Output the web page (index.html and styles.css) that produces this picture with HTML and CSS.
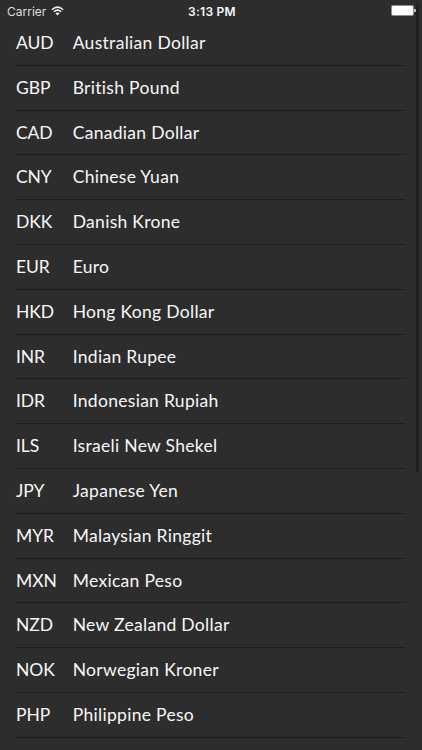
FILE: index.html
```html
<!DOCTYPE html>
<html lang="en">
<head>
    <meta charset="UTF-8">
    <meta name="viewport" content="width=device-width, initial-scale=1.0">
    <title>Currencies</title>
    <link rel="stylesheet" href="styles.css">
</head>
<body>
    <header class="status-bar">
        <div class="carrier">
            <span>Carrier</span>
            <svg class="wifi" viewBox="0 0 13 10" aria-hidden="true">
                <path d="M0.9 3.7 Q6.5 -1.5 12.1 3.7" />
                <path d="M2.9 5.8 Q6.5 2.5 10.1 5.8" />
                <path class="wifi-dot" d="M4.5 7.3 Q6.5 5.6 8.5 7.3 L6.5 9.4 Z" />
            </svg>
        </div>
        <span class="time">3:13 PM</span>
        <div class="battery"><span class="battery-level"></span></div>
    </header>

    <ul class="currency-list">
        <li class="currency"><span class="code">AUD</span><span class="name">Australian Dollar</span></li>
        <li class="currency"><span class="code">GBP</span><span class="name">British Pound</span></li>
        <li class="currency"><span class="code">CAD</span><span class="name">Canadian Dollar</span></li>
        <li class="currency"><span class="code">CNY</span><span class="name">Chinese Yuan</span></li>
        <li class="currency"><span class="code">DKK</span><span class="name">Danish Krone</span></li>
        <li class="currency"><span class="code">EUR</span><span class="name">Euro</span></li>
        <li class="currency"><span class="code">HKD</span><span class="name">Hong Kong Dollar</span></li>
        <li class="currency"><span class="code">INR</span><span class="name">Indian Rupee</span></li>
        <li class="currency"><span class="code">IDR</span><span class="name">Indonesian Rupiah</span></li>
        <li class="currency"><span class="code">ILS</span><span class="name">Israeli New Shekel</span></li>
        <li class="currency"><span class="code">JPY</span><span class="name">Japanese Yen</span></li>
        <li class="currency"><span class="code">MYR</span><span class="name">Malaysian Ringgit</span></li>
        <li class="currency"><span class="code">MXN</span><span class="name">Mexican Peso</span></li>
        <li class="currency"><span class="code">NZD</span><span class="name">New Zealand Dollar</span></li>
        <li class="currency"><span class="code">NOK</span><span class="name">Norwegian Kroner</span></li>
        <li class="currency"><span class="code">PHP</span><span class="name">Philippine Peso</span></li>
    </ul>

    <div class="scroll-indicator"></div>
</body>
</html>
```

FILE: styles.css
```css
body {
    position: relative;
    height: 750px;
    margin: 0;
    overflow: hidden;
    background-color: #2d2d2d;
    color: #f7f7f7;
    font-family: Lato, sans-serif;
}
.status-bar {
    display: grid;
    grid-template-columns: 1fr auto 1fr;
    align-items: center;
    box-sizing: border-box;
    height: 21px;
    padding: 1px 5px 0 7px;
    font-family: Inter, sans-serif;
    font-size: 12px;
}
.carrier {
    display: flex;
    align-items: center;
    gap: 5px;
    color: #dedede;
}
.wifi {
    width: 13px;
    height: 10px;
    margin-top: -1px;
    fill: none;
    stroke: #f2f2f2;
    stroke-width: 1.5;
}
.wifi-dot {
    fill: #f2f2f2;
    stroke: none;
}
.time {
    font-weight: 600;
    letter-spacing: 0.25px;
}
.battery {
    position: relative;
    justify-self: end;
    box-sizing: border-box;
    width: 23px;
    height: 11px;
    margin: -1px 3px 0 0;
    padding: 1px;
    border-radius: 2px;
    background-color: #8d8d8d;
}
.battery::after {
    content: '';
    position: absolute;
    top: 4px;
    right: -2px;
    width: 2px;
    height: 3px;
    border-radius: 0 1px 1px 0;
    background-color: #c8c8c8;
}
.battery-level {
    display: block;
    height: 9px;
    border-radius: 1px;
    background-color: #fff;
}
.currency-list {
    margin: 0;
    padding: 0 16px;
    list-style: none;
}
.currency {
    display: flex;
    align-items: center;
    box-sizing: border-box;
    height: 44.8px;
    padding-bottom: 0.8px;
    border-bottom: 1px solid #1d1d1d;
    font-size: 17.5px;
    letter-spacing: 0.3px;
}
.code {
    width: 56.7px;
    letter-spacing: -0.1px;
}
/* sits over the list, like the native one */
.scroll-indicator {
    position: absolute;
    top: 4px;
    right: 3px;
    width: 3px;
    height: 469px;
    border-radius: 2px;
    background-color: #212121;
}
```
